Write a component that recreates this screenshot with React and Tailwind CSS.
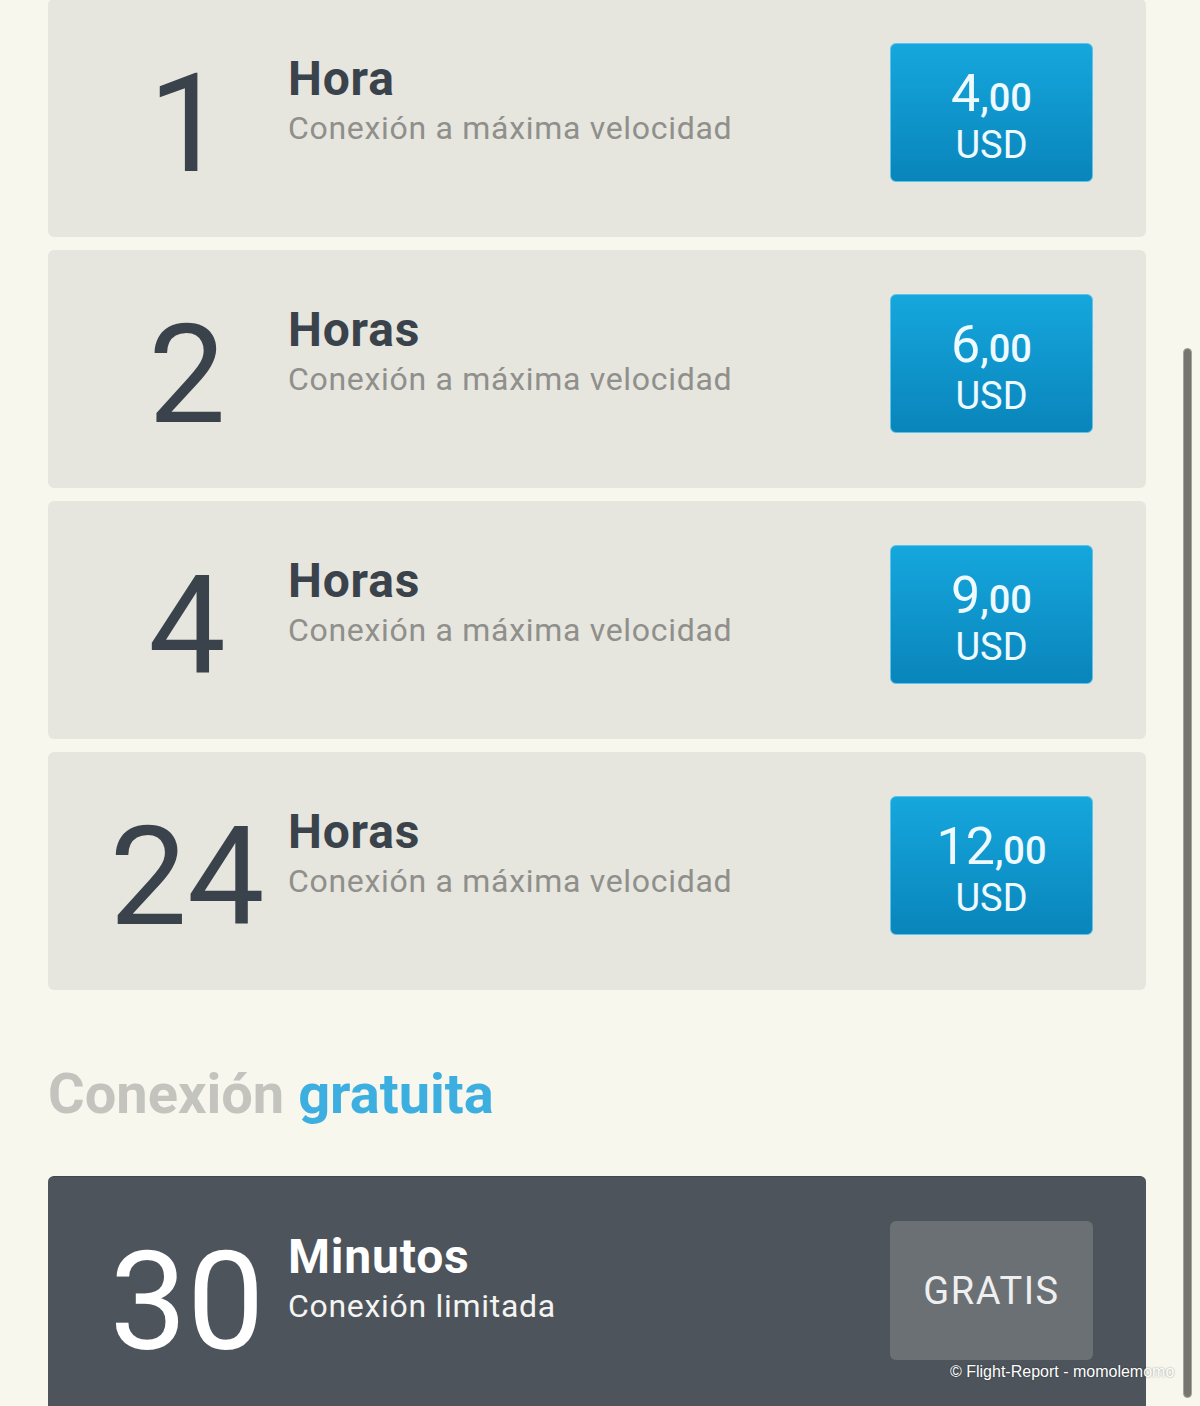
const plans = [
    { amount: '1', unit: 'Hora', price: '4' },
    { amount: '2', unit: 'Horas', price: '6' },
    { amount: '4', unit: 'Horas', price: '9' },
    { amount: '24', unit: 'Horas', price: '12' },
];

function PlanRow({ amount, unit, subtitle, dark = false, children }) {
    const cardClass = dark
        ? 'bg-[#4d545b] border-t border-[#40474e] text-white'
        : 'bg-[#e6e5de] text-[#3a434b]';

    return (
        <div className={`flex h-[238px] rounded-md pl-[54px] pr-[53px] pt-[44px] ${cardClass}`}>
            <div className="w-[170px] shrink-0 text-center">
                <div className="mt-[12px] text-[138px] leading-none font-normal">{amount}</div>
            </div>
            <div className="ml-[16px] flex-1">
                <div className="mt-[12px] text-[48px] leading-none font-bold tracking-[0.8px]">{unit}</div>
                <div className={`mt-[9px] text-[32px] leading-none tracking-[0.7px] ${dark ? 'text-[#f4f4f2]' : 'text-[#8f8f8b]'}`}>
                    {subtitle}
                </div>
            </div>
            {children}
        </div>
    );
}

function PriceButton({ price }) {
    return (
        <div className="flex h-[139px] w-[203px] shrink-0 flex-col items-center rounded-md border border-[#5cc3ea] bg-gradient-to-b from-[#15a7dd] to-[#0985bb] pt-[24px] text-[#eefaff]">
            <div className="flex items-baseline leading-none">
                <span className="text-[52px] leading-none">{price}</span>
                <span className="text-[38px] leading-none font-medium">,00</span>
            </div>
            <div className="mt-[6px] text-[38px] leading-none">USD</div>
        </div>
    );
}

export default function App() {
    return (
        <div
            className="relative h-[1406px] overflow-hidden bg-[#f7f7ee]"
            style={{ fontFamily: 'Roboto, "Noto Sans", sans-serif' }}
        >
            <div className="-mt-px flex w-[1194px] flex-col px-[48px]">
                <div className="flex flex-col gap-[13px]">
                    {plans.map((plan) => (
                        <PlanRow
                            key={plan.amount}
                            amount={plan.amount}
                            unit={plan.unit}
                            subtitle="Conexión a máxima velocidad"
                        >
                            <PriceButton price={plan.price} />
                        </PlanRow>
                    ))}
                </div>

                <h2 className="mt-[76px] text-[56px] leading-none font-bold">
                    <span className="text-[#c4c4bf]">Conexión </span>
                    <span className="text-[#3daee0]">gratuita</span>
                </h2>

                <div className="mt-[54px]">
                    <PlanRow amount="30" unit="Minutos" subtitle="Conexión limitada" dark>
                        <div className="flex h-[139px] w-[203px] shrink-0 items-center justify-center rounded-md bg-[#6b7075] text-[38px] leading-none tracking-[1.5px] text-[#efefef]">
                            GRATIS
                        </div>
                    </PlanRow>
                </div>
            </div>

            {/* scrollbar overlay */}
            <div className="absolute left-[1183px] top-[348px] h-[1050px] w-[9px] rounded-full border border-[#a3a39c] bg-[#76766f]" />

            {/* watermark */}
            <div
                className="absolute left-[950px] top-[1364px] text-[16px] leading-none text-white [text-shadow:0_0_2px_rgba(0,0,0,0.45)]"
                style={{ fontFamily: '"Liberation Sans", Arial, sans-serif' }}
            >
                © Flight-Report - momolemomo
            </div>
        </div>
    );
}
